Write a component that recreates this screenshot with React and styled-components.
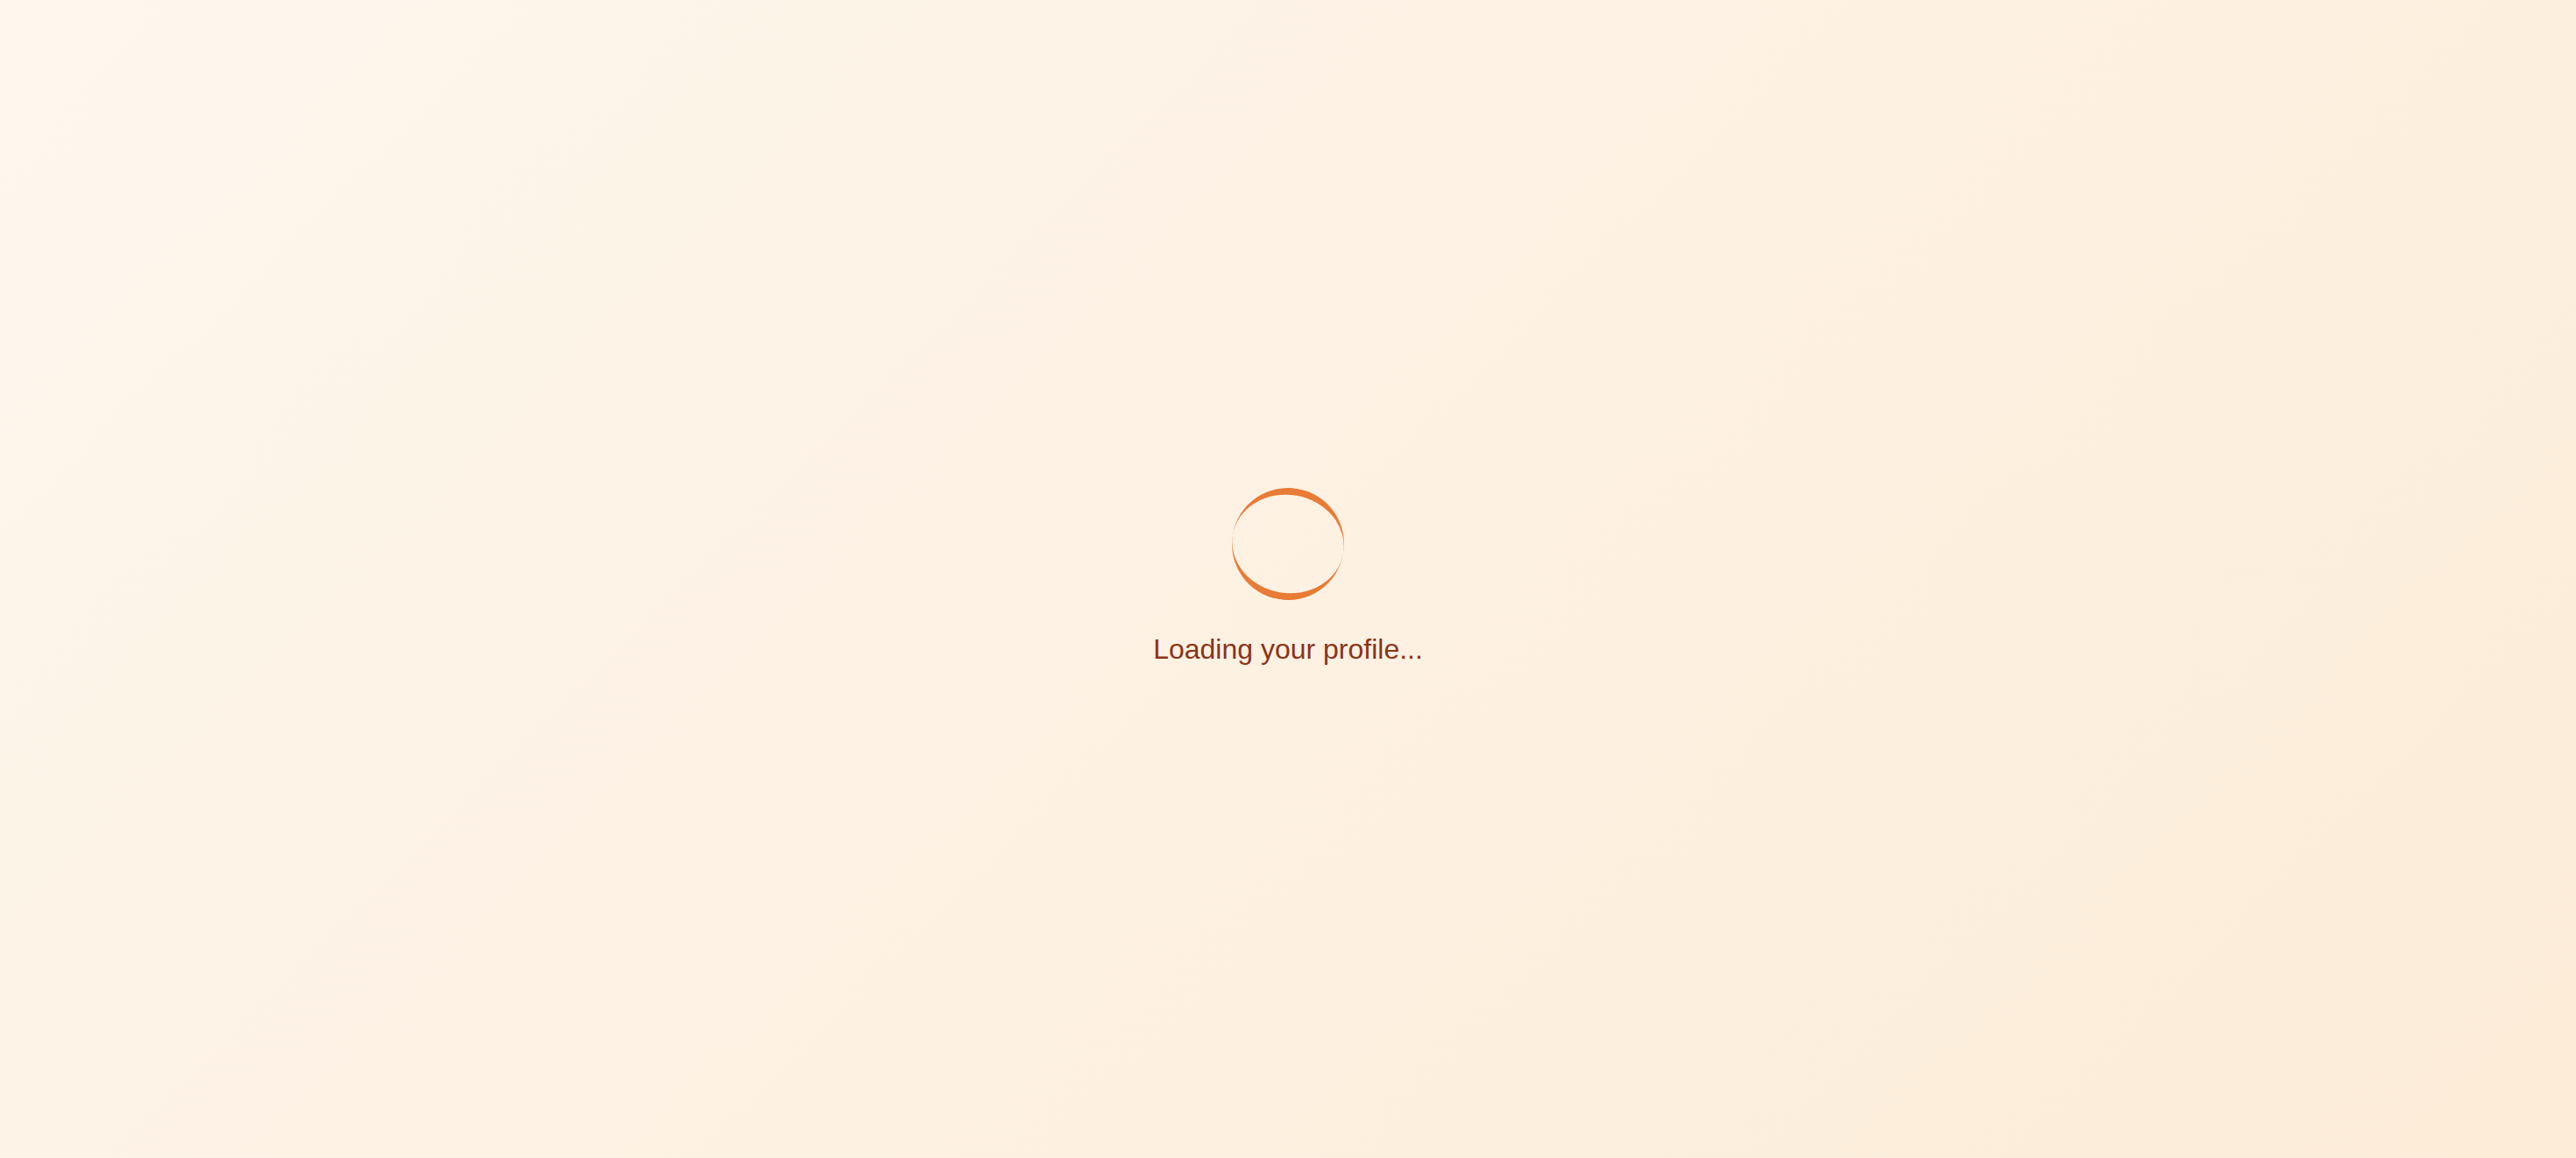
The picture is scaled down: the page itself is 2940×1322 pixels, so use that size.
import React from "react";
import styled, { createGlobalStyle } from "styled-components";

const GlobalStyle = createGlobalStyle`
  html, body { margin: 0; padding: 0; }
  body { font-family: "Liberation Sans", Arial, sans-serif; }
`;

const Page = styled.div`
  min-height: 100vh;
  display: flex;
  flex-direction: column;
  align-items: center;
  justify-content: center;
  background: linear-gradient(135deg, #fef7ee 0%, #fdf1e2 50%, #fcecd8 100%);
`;

const Spinner = styled.div`
  width: 128px;
  height: 128px;
  box-sizing: border-box;
  border-radius: 50%;
  border-style: solid;
  border-color: #e87b35;
  border-width: 8px 0;
  transform: rotate(10deg);
`;

const Message = styled.p`
  margin: 32px 0 0;
  font-family: "Liberation Sans", Arial, sans-serif;
  font-size: 32px;
  line-height: 48px;
  color: #8b3418;
`;

export default function App() {
  return (
    <>
      <GlobalStyle />
      <Page>
        <Spinner />
        <Message>Loading your profile...</Message>
      </Page>
    </>
  );
}
